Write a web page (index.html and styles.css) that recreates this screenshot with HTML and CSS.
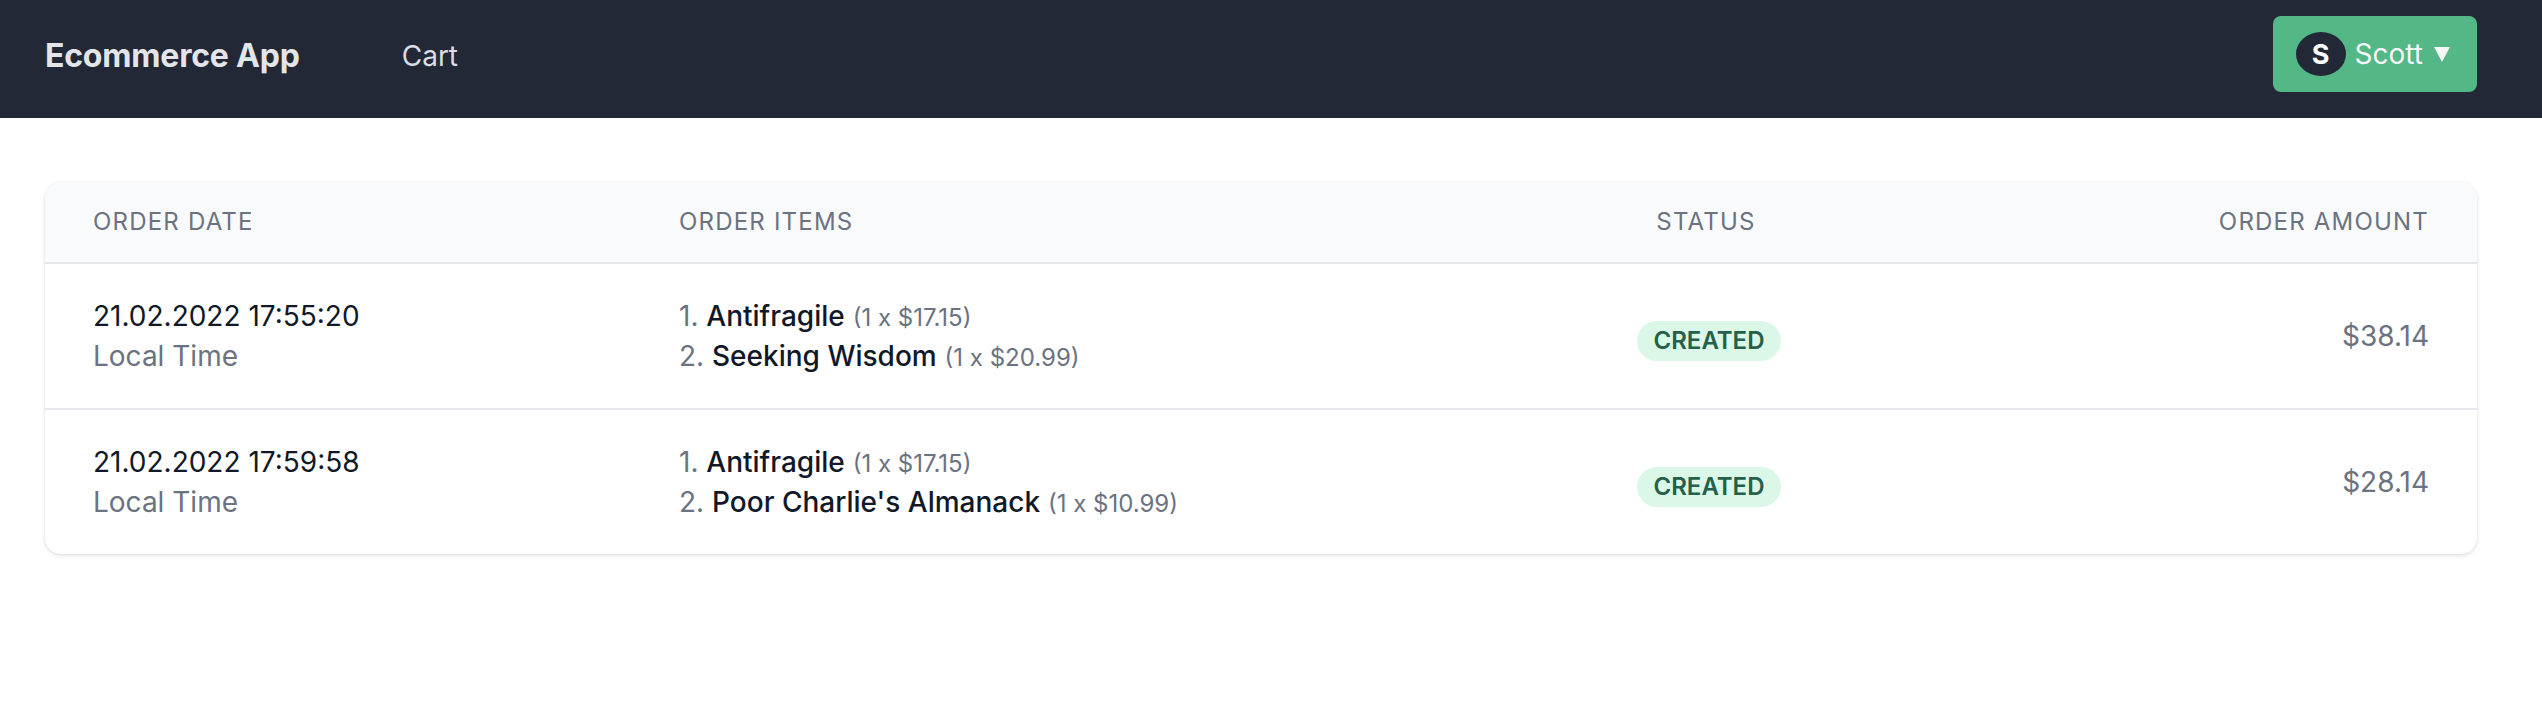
FILE: index.html
```html
<!DOCTYPE html>
<html lang="en">
<head>
<meta charset="utf-8">
<title>Ecommerce App</title>
<link rel="stylesheet" href="styles.css">
</head>
<body>
<nav class="navbar">
  <div class="nav-left">
    <a class="brand" href="#">Ecommerce App</a>
    <a class="nav-link" href="#">Cart</a>
  </div>
  <button class="user-btn" type="button">
    <span class="avatar">S</span>
    <span class="user-name">Scott</span>
    <svg class="caret" width="16" height="15" viewBox="0 0 16 15"><path d="M0 0 H16 L8 15 Z" fill="#f5f6f7"/></svg>
  </button>
</nav>
<main class="main">
  <div class="card">
    <table class="orders">
      <colgroup>
        <col class="c-date"><col class="c-items"><col class="c-status"><col class="c-amount">
      </colgroup>
      <thead>
        <tr>
          <th class="th-left">Order Date</th>
          <th class="th-left th-items">Order Items</th>
          <th class="th-center">Status</th>
          <th class="th-right">Order Amount</th>
        </tr>
      </thead>
      <tbody>
        <tr>
          <td class="td-date">
            <div class="date">21.02.2022 17:55:20</div>
            <div class="local">Local Time</div>
          </td>
          <td class="td-items">
            <div class="item"><span class="num">1.</span> <span class="title">Antifragile</span> <span class="qty">(1 x $17.15)</span></div>
            <div class="item"><span class="num">2.</span> <span class="title">Seeking Wisdom</span> <span class="qty">(1 x $20.99)</span></div>
          </td>
          <td class="td-status"><span class="badge">CREATED</span></td>
          <td class="td-amount">$38.14</td>
        </tr>
        <tr>
          <td class="td-date">
            <div class="date">21.02.2022 17:59:58</div>
            <div class="local">Local Time</div>
          </td>
          <td class="td-items">
            <div class="item"><span class="num">1.</span> <span class="title">Antifragile</span> <span class="qty">(1 x $17.15)</span></div>
            <div class="item"><span class="num">2.</span> <span class="title">Poor Charlie's Almanack</span> <span class="qty">(1 x $10.99)</span></div>
          </td>
          <td class="td-status"><span class="badge">CREATED</span></td>
          <td class="td-amount">$28.14</td>
        </tr>
      </tbody>
    </table>
  </div>
</main>
</body>
</html>
```
FILE: styles.css
```css
* { box-sizing: border-box; }
html, body { margin: 0; padding: 0; background: #ffffff; }
body {
  font-family: Inter, "Noto Sans", "Liberation Sans", sans-serif;
  color: #111827;
}

.navbar {
  background: #222836;
  display: flex;
  align-items: center;
  justify-content: space-between;
  padding: 16px 65px 26px 45px;
  height: 118px;
}
.nav-left {
  display: flex;
  align-items: center;
  gap: 102px;
  margin-top: 3px;
}
.brand {
  color: #e3e5e9;
  font-weight: 700;
  font-size: 32px;
  line-height: 48px;
  letter-spacing: -0.2px;
  text-decoration: none;
}
.nav-link {
  color: #dadde2;
  font-size: 28px;
  line-height: 40px;
  text-decoration: none;
}
.user-btn {
  display: flex;
  align-items: center;
  height: 76px;
  padding: 0 27px 0 23px;
  background: #53b786;
  border: none;
  border-radius: 8px;
  font-family: inherit;
  cursor: pointer;
}
.avatar {
  width: 50px;
  height: 44px;
  border-radius: 50%;
  background: #222836;
  color: #ffffff;
  font-weight: 700;
  font-size: 27px;
  display: flex;
  align-items: center;
  justify-content: center;
}
.user-name {
  color: #f5f6f7;
  font-size: 28px;
  line-height: 40px;
  margin-left: 9px;
}
.caret { margin-left: 11px; }

.main {
  padding: 64px 65px 64px 45px;
}
.card {
  background: #fff;
  border-radius: 16px;
  overflow: hidden;
  box-shadow: 0 2px 4px rgba(0,0,0,0.10), 0 0 3px rgba(0,0,0,0.07);
}
.orders {
  width: 100%;
  border-collapse: collapse;
  table-layout: fixed;
}
.c-date { width: 586px; }
.c-items { width: 919px; }
.c-status { width: 312px; }
.c-amount { width: 615px; }

.orders thead tr {
  background: #f9fafb;
  border-bottom: 2px solid #e5e7eb;
}
.orders th {
  padding: 24px 48px;
  font-size: 24px;
  line-height: 32px;
  font-weight: 400;
  letter-spacing: 0.05em;
  text-transform: uppercase;
  color: #6b7280;
}
.th-left { text-align: left; }
.th-items { padding-left: 48px; }
.th-center { text-align: center; padding-left: 0; padding-right: 0; }
.th-right { text-align: right; }

.orders tbody tr { border-bottom: 2px solid #e5e7eb; }
.orders tbody tr:last-child { border-bottom: none; }
.orders td {
  padding: 32px 48px;
  font-size: 28px;
  line-height: 40px;
  vertical-align: middle;
}
.date, .local { height: 40px; }
.date { color: #111827; }
.local { color: #6b7280; }
.item { white-space: nowrap; height: 40px; }
.num { color: #6b7280; }
.title { color: #111827; font-weight: 500; }
.qty { color: #6b7280; font-size: 24px; line-height: 20px; }

.orders td.td-status {
  text-align: center;
  vertical-align: top;
  padding: 55px 0 0 0;
}
.badge {
  display: inline-block;
  padding: 0 17px;
  height: 40px;
  line-height: 40px;
  border-radius: 20px;
  background: #dbf7e7;
  color: #25604a;
  font-size: 24px;
  font-weight: 600;
  margin-left: 6px;
}
.td-amount { text-align: right; color: #6b7280; }
```
